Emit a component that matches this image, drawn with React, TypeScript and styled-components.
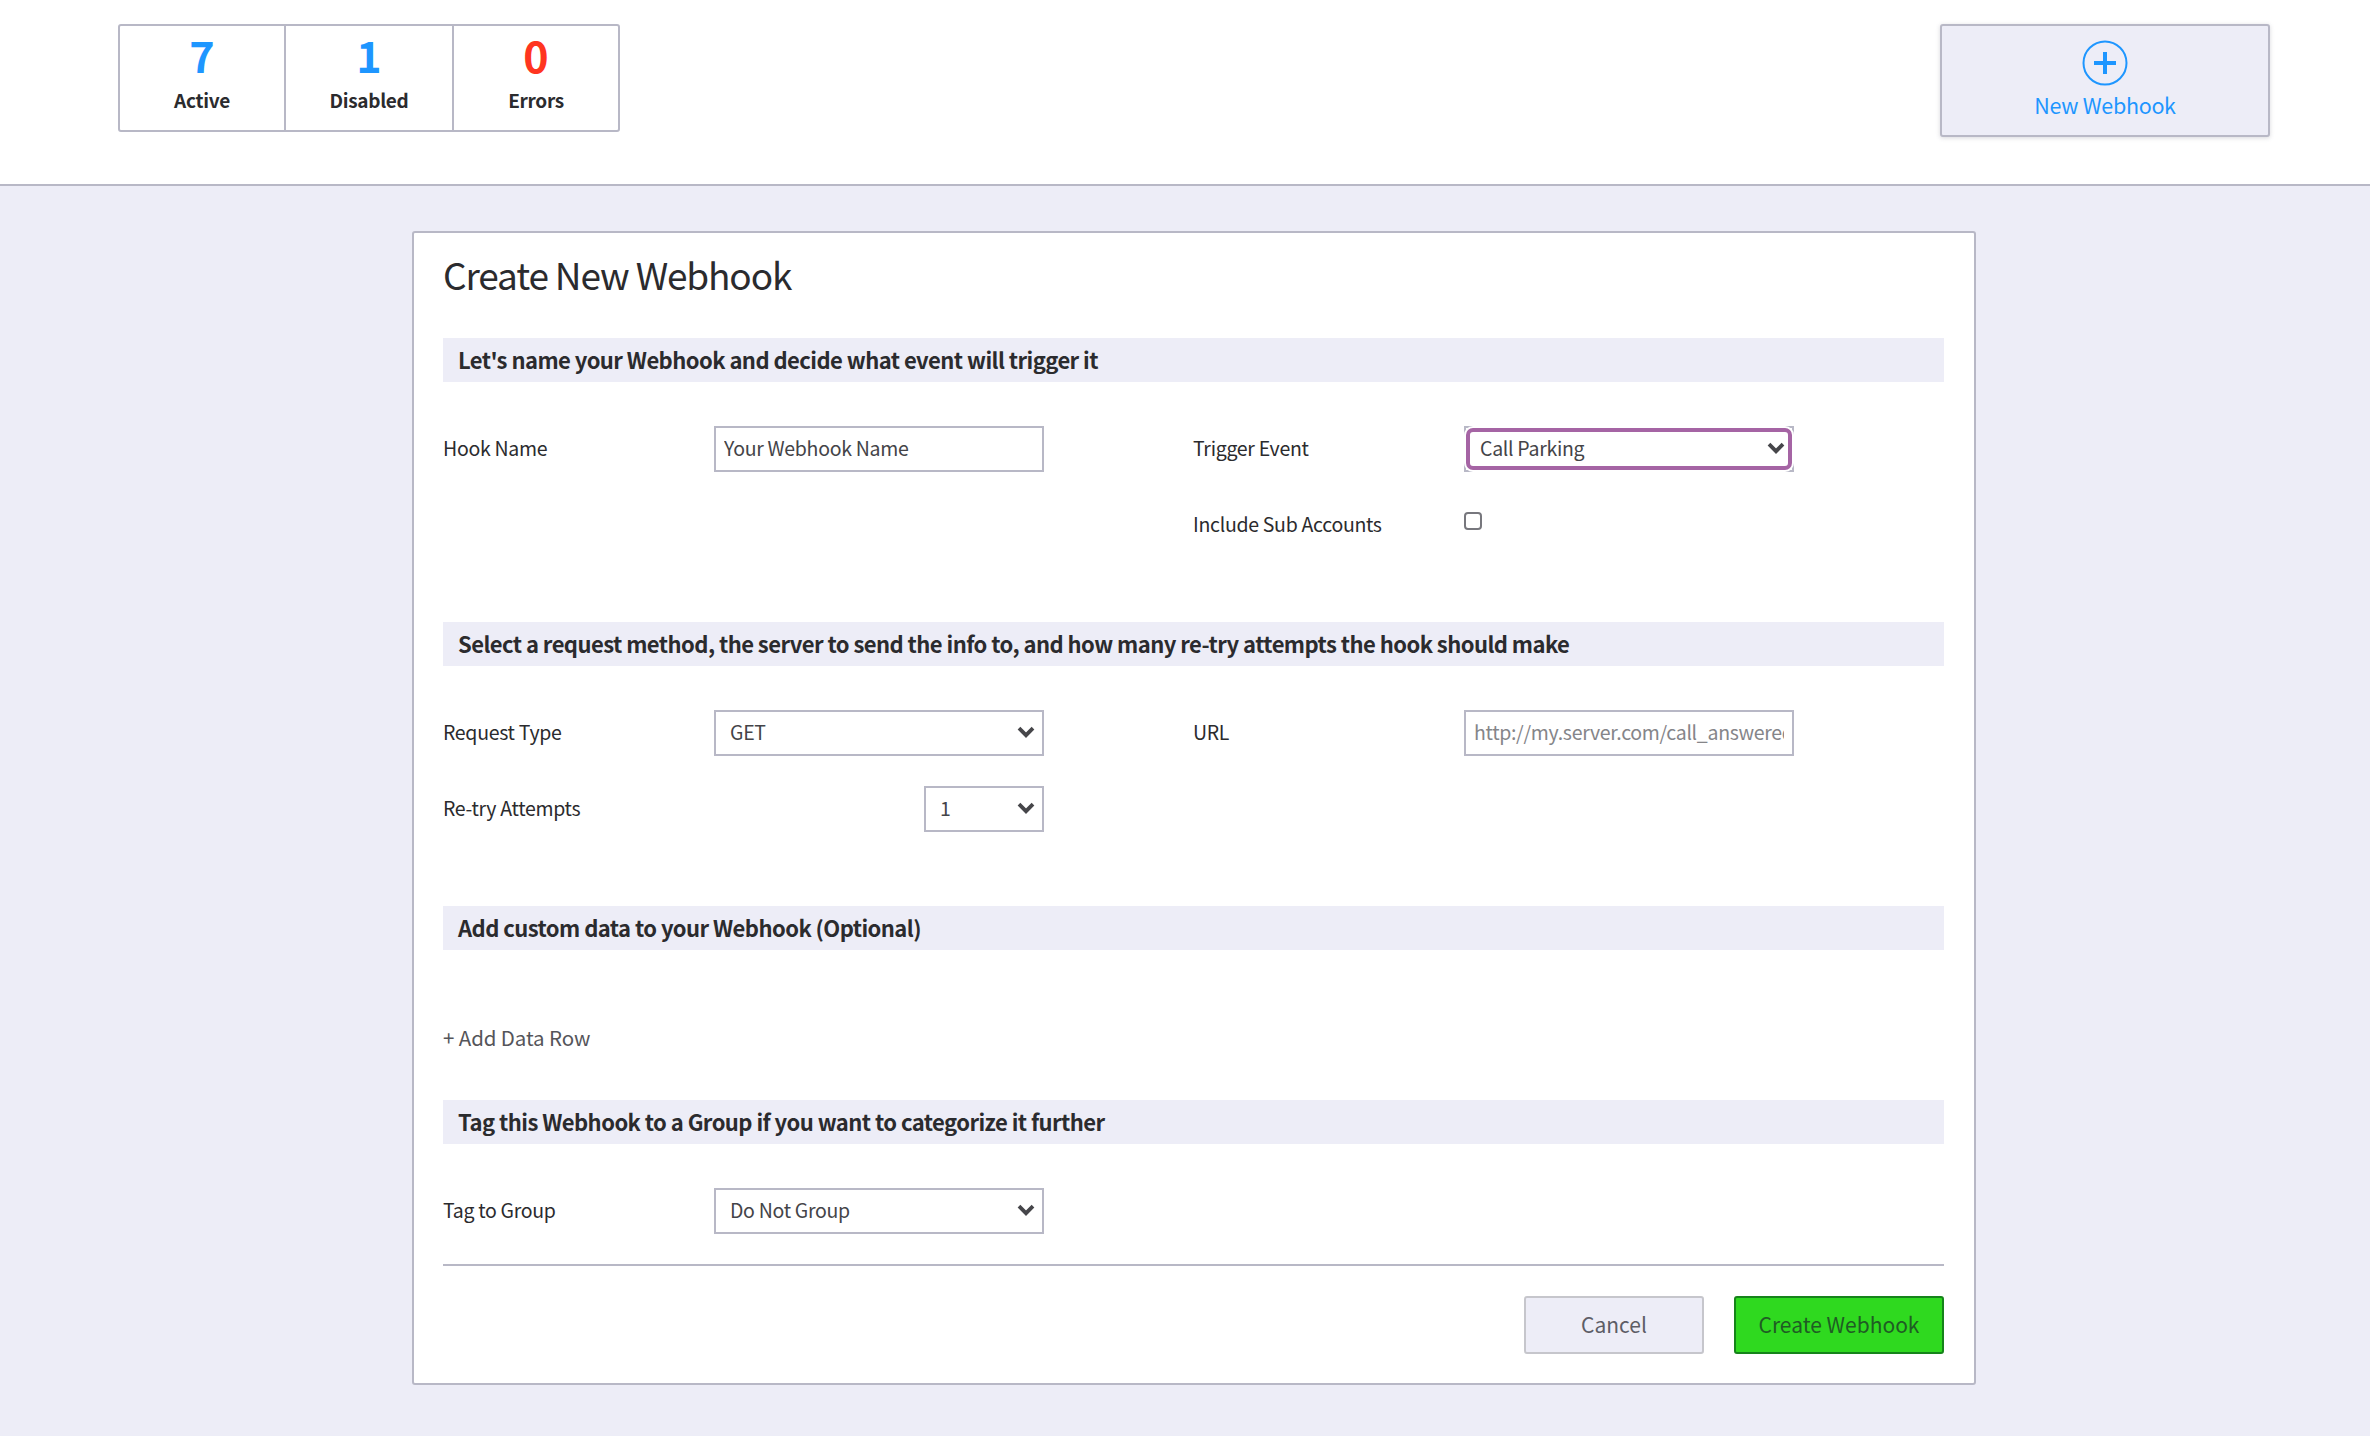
import styled, { createGlobalStyle } from 'styled-components';

const FONT = `"Noto Sans CJK SC", "Noto Sans", sans-serif`;
const LINE = '#b8b8c6';
const TINT = '#ededf7';
const BLUE = '#1e96ff';
const INK = '#2b2b2e';

const GlobalStyle = createGlobalStyle`
  html, body {
    margin: 0;
    padding: 0;
    background: ${TINT};
    font-family: ${FONT};
    color: ${INK};
  }
  * { box-sizing: border-box; }
`;

function Chevron() {
  return (
    <ChevronIcon viewBox="0 0 18 12" width="18" height="12">
      <path d="M2 2.2 L9 9.2 L16 2.2" fill="none" stroke="#46464a" strokeWidth="3.8" />
    </ChevronIcon>
  );
}

function SelectBox({
  value,
  options,
  width = 330,
  focused = false,
}: {
  value: string;
  options: string[];
  width?: number;
  focused?: boolean;
}) {
  return (
    <SelectWrap $width={width}>
      <NativeSelect defaultValue={value}>
        {options.map((o) => (
          <option key={o}>{o}</option>
        ))}
      </NativeSelect>
      <Chevron />
      {focused && <FocusRing />}
    </SelectWrap>
  );
}

export default function App() {
  return (
    <>
      <GlobalStyle />
      <Header>
        <Stats>
          <Stat>
            <StatNumber $color={BLUE}>7</StatNumber>
            <StatLabel>Active</StatLabel>
          </Stat>
          <Stat>
            <StatNumber $color={BLUE}>1</StatNumber>
            <StatLabel>Disabled</StatLabel>
          </Stat>
          <Stat>
            <StatNumber $color="#ff3520">0</StatNumber>
            <StatLabel>Errors</StatLabel>
          </Stat>
        </Stats>
        <NewButton>
          <svg viewBox="0 0 46 46" width="46" height="46">
            <circle cx="23" cy="23" r="21.5" fill="none" stroke={BLUE} strokeWidth="2" />
            <path d="M23 12 V34 M12 23 H34" fill="none" stroke={BLUE} strokeWidth="4" />
          </svg>
          New Webhook
        </NewButton>
      </Header>

      <Page>
        <Card>
          <Title>Create New Webhook</Title>

          <SectionBar>Let's name your Webhook and decide what event will trigger it</SectionBar>
          <FieldGrid>
            <Field>
              <Label>Hook Name</Label>
              <TextInput defaultValue="Your Webhook Name" />
            </Field>
            <Field>
              <Label>Trigger Event</Label>
              <SelectBox value="Call Parking" options={['Call Parking', 'Call Answered']} focused />
            </Field>
            <div />
            <Field>
              <Label>Include Sub Accounts</Label>
              <CheckCell>
                <Check type="checkbox" />
              </CheckCell>
            </Field>
          </FieldGrid>

          <SectionBar>
            Select a request method, the server to send the info to, and how many re-try attempts the hook should make
          </SectionBar>
          <FieldGrid>
            <Field>
              <Label>Request Type</Label>
              <SelectBox value="GET" options={['GET', 'POST']} />
            </Field>
            <Field>
              <Label>URL</Label>
              <UrlInput placeholder="http://my.server.com/call_answered" />
            </Field>
            <Field>
              <Label>Re-try Attempts</Label>
              <SelectBox value="1" options={['1', '2', '3']} width={120} />
            </Field>
          </FieldGrid>

          <SectionBar>Add custom data to your Webhook (Optional)</SectionBar>
          <AddRow>+ Add Data Row</AddRow>

          <SectionBar>Tag this Webhook to a Group if you want to categorize it further</SectionBar>
          <TagGrid>
            <Field>
              <Label>Tag to Group</Label>
              <SelectBox value="Do Not Group" options={['Do Not Group']} />
            </Field>
          </TagGrid>

          <Footer>
            <CancelButton>Cancel</CancelButton>
            <CreateButton>Create Webhook</CreateButton>
          </Footer>
        </Card>
      </Page>
    </>
  );
}

const Header = styled.header`
  height: 186px;
  background: #fff;
  border-bottom: 2px solid ${LINE};
  padding: 24px 100px 0 118px;
  display: flex;
  justify-content: space-between;
  align-items: flex-start;
`;

const Stats = styled.div`
  width: 502px;
  height: 108px;
  border: 2px solid ${LINE};
  border-radius: 3px;
  display: grid;
  grid-template-columns: 164px 168px 1fr;
`;

const Stat = styled.div`
  display: flex;
  flex-direction: column;
  align-items: center;
  padding-top: 3px;
  & + & {
    border-left: 2px solid ${LINE};
  }
`;

const StatNumber = styled.div<{ $color: string }>`
  font-size: 43px;
  line-height: 50px;
  font-weight: 700;
  color: ${(p) => p.$color};
`;

const StatLabel = styled.div`
  font-size: 19px;
  line-height: 28px;
  font-weight: 700;
  letter-spacing: -0.3px;
  margin-top: 7px;
`;

const NewButton = styled.button`
  width: 330px;
  height: 113px;
  background: ${TINT};
  border: 2px solid ${LINE};
  border-radius: 3px;
  box-shadow: 0 1px 4px rgba(100, 100, 120, 0.25);
  display: flex;
  flex-direction: column;
  align-items: center;
  padding: 14px 0 0;
  color: ${BLUE};
  font-family: ${FONT};
  font-size: 21.5px;
  letter-spacing: -0.3px;
  line-height: 30px;
  gap: 4px;
`;

const Page = styled.main`
  height: 1250px;
  padding: 45px 0 0 18px;
  display: flex;
  justify-content: center;
`;

const Card = styled.section`
  width: 1564px;
  height: 1154px;
  background: #fff;
  border: 2px solid ${LINE};
  border-radius: 3px;
  padding: 0 30px 0 29px;
`;

const Title = styled.h1`
  margin: 19px 0 40px;
  font-size: 37px;
  letter-spacing: -1.15px;
  line-height: 44px;
  padding-bottom: 2px;
  font-weight: 400;
`;

const SectionBar = styled.div`
  height: 44px;
  background: ${TINT};
  padding-left: 15px;
  font-size: 22px;
  letter-spacing: -0.55px;
  line-height: 42px;
  font-weight: 700;
`;

const FieldGrid = styled.div`
  display: grid;
  grid-template-columns: 601px 601px;
  grid-auto-rows: 46px;
  column-gap: 149px;
  row-gap: 30px;
  margin: 44px 0 74px;
`;

const TagGrid = styled(FieldGrid)`
  margin: 44px 0 30px;
`;

const Field = styled.div`
  display: flex;
  justify-content: space-between;
  align-items: center;
`;

const Label = styled.label`
  font-size: 19.5px;
  letter-spacing: -0.3px;
  line-height: 28px;
  padding-bottom: 2px;
`;

const TextInput = styled.input`
  width: 330px;
  height: 46px;
  border: 2px solid ${LINE};
  border-radius: 0;
  padding: 0 8px 3px;
  font-family: ${FONT};
  font-size: 19.5px;
  letter-spacing: -0.3px;
  color: #444448;
  outline: none;
`;

const UrlInput = styled(TextInput)`
  &::placeholder {
    color: #858589;
    opacity: 1;
  }
`;

const SelectWrap = styled.div<{ $width: number }>`
  position: relative;
  width: ${(p) => p.$width}px;
  height: 46px;
`;

const NativeSelect = styled.select`
  appearance: none;
  width: 100%;
  height: 100%;
  border: 2px solid ${LINE};
  border-radius: 0;
  background: #fff;
  padding: 0 14px 3px;
  font-family: ${FONT};
  font-size: 19.5px;
  letter-spacing: -0.3px;
  color: #444448;
  outline: none;
`;

const ChevronIcon = styled.svg`
  position: absolute;
  right: 9px;
  top: 16px;
  pointer-events: none;
`;

const FocusRing = styled.div`
  position: absolute;
  inset: 2px;
  border: 4px solid #a564a4;
  border-radius: 7px;
  box-shadow: 0 0 0 2px #fff;
  pointer-events: none;
`;

const CheckCell = styled.div`
  width: 330px;
  height: 46px;
  padding-top: 10px;
`;

const Check = styled.input`
  appearance: none;
  display: block;
  margin: 0;
  width: 18px;
  height: 18px;
  background: #fff;
  border: 2px solid #77777d;
  border-radius: 4px;
`;

const AddRow = styled.div`
  height: 150px;
  padding-top: 73px;
  font-size: 20.5px;
  letter-spacing: -0.1px;
  line-height: 28px;
  color: #55555a;
`;

const Footer = styled.footer`
  border-top: 2px solid ${LINE};
  padding-top: 30px;
  display: flex;
  justify-content: flex-end;
  gap: 30px;
`;

const CancelButton = styled.button`
  width: 180px;
  height: 58px;
  background: ${TINT};
  border: 2px solid #c6c6cc;
  border-radius: 3px;
  padding-bottom: 3px;
  font-family: ${FONT};
  font-size: 21px;
  color: #5d5d66;
`;

const CreateButton = styled.button`
  width: 210px;
  height: 58px;
  background: #2fd91f;
  border: 2px solid #16841a;
  border-radius: 3px;
  padding-bottom: 3px;
  font-family: ${FONT};
  font-size: 21px;
  color: #1f5c24;
`;
